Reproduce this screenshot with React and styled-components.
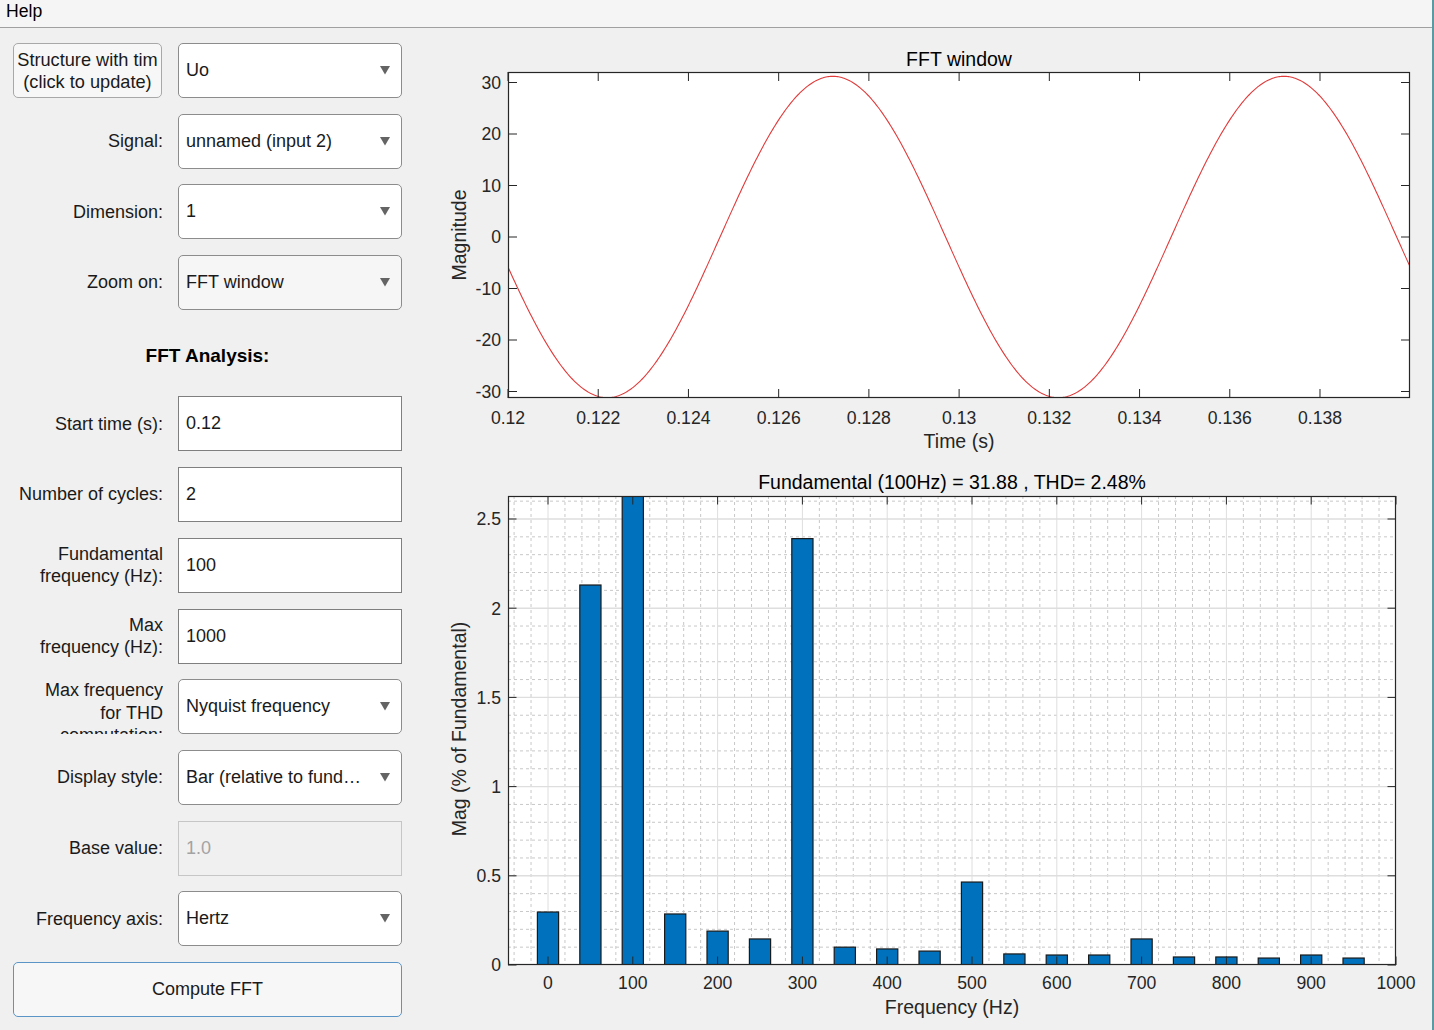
import React from 'react'
import styled, { createGlobalStyle } from 'styled-components'

const GlobalStyle = createGlobalStyle`
  html, body {
    margin: 0;
    padding: 0;
    background: #f0f0f0;
  }
  body {
    font-family: "Liberation Sans", Arial, sans-serif;
  }
`

const Window = styled.div`
  width: 1434px;
  height: 1030px;
  box-sizing: border-box;
  border-right: 2px solid #5b9aa2;
  background: #f0f0f0;
  display: flex;
  flex-direction: column;
  overflow: hidden;
`

const MenuBar = styled.div`
  box-sizing: border-box;
  height: 28px;
  padding: 0 0 4px 6px;
  border-bottom: 1px solid #a0a0a0;
  background: #f5f5f5;
  display: flex;
  align-items: center;
  font-size: 17.6px;
  color: #000;
`

const Content = styled.div`
  display: flex;
  gap: 28px;
  padding: 15px 0 0 13px;
`

const Panel = styled.div`
  width: 389px;
  display: flex;
  flex-direction: column;
  gap: 15.7px;
`

const Row = styled.div`
  display: grid;
  grid-template-columns: 150px 224px;
  column-gap: 15px;
  height: 55px;
`

const Label = styled.div`
  display: flex;
  flex-direction: column;
  justify-content: ${p => (p.$clip ? 'flex-start' : 'center')};
  align-items: flex-end;
  text-align: right;
  font-size: 18px;
  line-height: 22.5px;
  color: #1a1a1a;
  overflow: hidden;
  white-space: nowrap;
`

const PushButton = styled.div`
  box-sizing: border-box;
  width: 149px;
  border: 1px solid #a8a8a8;
  border-radius: 5px;
  background: #f7f7f7;
  display: flex;
  flex-direction: column;
  justify-content: center;
  align-items: center;
  font-size: 18.2px;
  line-height: 22px;
  color: #1a1a1a;
  overflow: hidden;
  white-space: nowrap;
`

const WideButton = styled(PushButton)`
  width: auto;
  height: 55px;
  border-color: #5b95c8;
  font-size: 18px;
`

const Select = styled.div`
  box-sizing: border-box;
  border: 1px solid #8c8c8c;
  border-radius: 5px;
  background: ${p => (p.$tint ? '#f6f6f6' : '#fff')};
  display: flex;
  align-items: center;
  padding: 0 11px 0 7px;
  font-size: 18px;
  color: #1a1a1a;
`

const SelectValue = styled.span`
  flex: 1;
  min-width: 0;
  overflow: hidden;
  white-space: nowrap;
  text-overflow: ellipsis;
`

const Arrow = styled.svg`
  flex: none;
  margin-left: 15px;
`

const Field = styled.div`
  box-sizing: border-box;
  border: 1px solid ${p => (p.$disabled ? '#c6c6c6' : '#7f7f7f')};
  background: ${p => (p.$disabled ? '#f0f0f0' : '#fff')};
  color: ${p => (p.$disabled ? '#a3a3a3' : '#1a1a1a')};
  display: flex;
  align-items: center;
  padding-left: 7px;
  font-size: 18px;
`

const Heading = styled.div`
  box-sizing: border-box;
  height: 55px;
  padding-top: 5px;
  display: flex;
  align-items: center;
  justify-content: center;
  font-size: 19px;
  font-weight: bold;
  color: #000;
`

const Plots = styled.div`
  display: flex;
  flex-direction: column;
`

const PlotSvg = styled.svg`
  display: block;
  font-family: "Liberation Sans", Arial, sans-serif;
`

const INK = '#262626'

function DropArrow() {
  return (
    <Arrow width="10" height="9" viewBox="0 0 10 9">
      <path d="M0 0 L10 0 L5 8.5 Z" fill="#646464" />
    </Arrow>
  )
}

function Dropdown({ value, tint }) {
  return (
    <Select $tint={tint}>
      <SelectValue>{value}</SelectValue>
      <DropArrow />
    </Select>
  )
}

/* ---------- time plot ---------- */
const tx = t => 508 + (t - 0.12) * 45111
const ty = v => 237 - v * 5.15

const sinePath = (() => {
  let d = ''
  for (let i = 0; i <= 800; i++) {
    const t = 0.12 + i * 0.000025
    const v = 31.2 * Math.sin(2 * Math.PI * 100 * (t - 0.1247))
    d += (i === 0 ? 'M' : 'L') + tx(t).toFixed(2) + ' ' + ty(v).toFixed(2)
  }
  return d
})()

const timeTicks = ['0.12', '0.122', '0.124', '0.126', '0.128', '0.13', '0.132', '0.134', '0.136', '0.138']
const magTicks = [30, 20, 10, 0, -10, -20, -30]

function TimePlot() {
  const TL = 9
  return (
    <PlotSvg width="1000" height="417" viewBox="430 43 1000 417">
      <defs>
        <clipPath id="clipTime">
          <rect x="508" y="72" width="902" height="326" />
        </clipPath>
      </defs>
      <text x="959" y="66" fontSize="19.5" fill="#000" textAnchor="middle">FFT window</text>
      <rect x="508" y="72" width="902" height="326" fill="#fff" />
      <path d={sinePath} fill="none" stroke="#e03a3a" strokeWidth="1.1" clipPath="url(#clipTime)" />
      {timeTicks.map(s => {
        const x = tx(parseFloat(s))
        return (
          <g key={s}>
            <line x1={x} y1="398" x2={x} y2={398 - TL} stroke={INK} />
            <line x1={x} y1="72" x2={x} y2={72 + TL} stroke={INK} />
            <text x={x} y="423.5" fontSize="17.6" fill={INK} textAnchor="middle">{s}</text>
          </g>
        )
      })}
      {magTicks.map(v => {
        const y = ty(v)
        return (
          <g key={v}>
            <line x1="508" y1={y} x2={508 + TL} y2={y} stroke={INK} />
            <line x1="1410" y1={y} x2={1410 - TL} y2={y} stroke={INK} />
            <text x="501" y={y + 6.3} fontSize="17.6" fill={INK} textAnchor="end">{v}</text>
          </g>
        )
      })}
      <rect x="508.5" y="72.5" width="901" height="325" fill="none" stroke={INK} strokeWidth="1.2" />
      <text x="959" y="448" fontSize="19.5" fill={INK} textAnchor="middle">Time (s)</text>
      <text transform="translate(466 235) rotate(-90)" fontSize="19.5" fill={INK} textAnchor="middle">Magnitude</text>
    </PlotSvg>
  )
}

/* ---------- spectrum plot ---------- */
const fx = f => 548 + f * 0.848
const fy = v => 965 - v * 178.4

const bars = [
  [0, 0.297], [50, 2.13], [100, 100], [150, 0.286], [200, 0.19],
  [250, 0.146], [300, 2.39], [350, 0.1], [400, 0.09], [450, 0.078],
  [500, 0.465], [550, 0.062], [600, 0.056], [650, 0.056], [700, 0.146],
  [750, 0.045], [800, 0.045], [850, 0.039], [900, 0.056], [950, 0.039],
]

const freqTicks = [0, 100, 200, 300, 400, 500, 600, 700, 800, 900, 1000]
const pctTicks = [0, 0.5, 1, 1.5, 2, 2.5]

const minorX = []
for (let f = -40; f < 1000; f += 20) if (f % 100 !== 0) minorX.push(f)
const minorY = []
for (let i = 1; i <= 26; i++) if (i % 5 !== 0) minorY.push(i / 10)

function SpectrumPlot() {
  const TL = 8.5
  return (
    <PlotSvg width="1000" height="570" viewBox="430 460 1000 570">
      <defs>
        <clipPath id="clipFreq">
          <rect x="508" y="496" width="888" height="469" />
        </clipPath>
      </defs>
      <text x="952" y="489" fontSize="19.5" fill="#000" textAnchor="middle">
        Fundamental (100Hz) = 31.88 , THD= 2.48%
      </text>
      <rect x="508" y="496" width="888" height="469" fill="#fff" />
      <g clipPath="url(#clipFreq)">
        {minorX.map(f => (
          <line key={'mx' + f} x1={fx(f)} y1="496" x2={fx(f)} y2="965" stroke="#c8c8c8" strokeDasharray="3 3" />
        ))}
        {minorY.map(v => (
          <line key={'my' + v} x1="508" y1={fy(v)} x2="1396" y2={fy(v)} stroke="#c8c8c8" strokeDasharray="3 3" />
        ))}
        {freqTicks.map(f => (
          <line key={'gx' + f} x1={fx(f)} y1="496" x2={fx(f)} y2="965" stroke="#dedede" />
        ))}
        {pctTicks.map(v => (
          <line key={'gy' + v} x1="508" y1={fy(v)} x2="1396" y2={fy(v)} stroke="#dedede" strokeWidth="1.4" />
        ))}
        {bars.map(([f, v]) => (
          <rect
            key={'b' + f}
            x={fx(f) - 10.6}
            y={Math.max(fy(v), 480)}
            width="21.2"
            height={965 - Math.max(fy(v), 480)}
            fill="#0072bd"
            stroke="#1a1a1a"
            strokeWidth="1.2"
          />
        ))}
      </g>
      {freqTicks.map(f => {
        const x = fx(f)
        return (
          <g key={'t' + f}>
            <line x1={x} y1="965" x2={x} y2={965 - TL} stroke={INK} />
            <line x1={x} y1="496" x2={x} y2={496 + TL} stroke={INK} />
            <text x={x} y="988.5" fontSize="17.6" fill={INK} textAnchor="middle">{f}</text>
          </g>
        )
      })}
      {pctTicks.map(v => {
        const y = fy(v)
        return (
          <g key={'p' + v}>
            <line x1="508" y1={y} x2={508 + TL} y2={y} stroke={INK} />
            <line x1="1396" y1={y} x2={1396 - TL} y2={y} stroke={INK} />
            <text x="501" y={y + 6.3} fontSize="17.6" fill={INK} textAnchor="end">{v}</text>
          </g>
        )
      })}
      <rect x="508.5" y="496.5" width="887" height="468" fill="none" stroke={INK} strokeWidth="1.2" />
      <text x="952" y="1014" fontSize="19.5" fill={INK} textAnchor="middle">Frequency (Hz)</text>
      <text transform="translate(466 729) rotate(-90)" fontSize="19.5" fill={INK} textAnchor="middle">
        Mag (% of Fundamental)
      </text>
    </PlotSvg>
  )
}

export default function App() {
  return (
    <>
      <GlobalStyle />
      <Window>
        <MenuBar>Help</MenuBar>
        <Content>
          <Panel>
            <Row>
              <PushButton>
                <span>Structure with tim</span>
                <span>(click to update)</span>
              </PushButton>
              <Dropdown value="Uo" />
            </Row>
            <Row>
              <Label>Signal:</Label>
              <Dropdown value="unnamed (input 2)" />
            </Row>
            <Row>
              <Label>Dimension:</Label>
              <Dropdown value="1" />
            </Row>
            <Row>
              <Label>Zoom on:</Label>
              <Dropdown value="FFT window" tint />
            </Row>
            <Heading>FFT Analysis:</Heading>
            <Row>
              <Label>Start time (s):</Label>
              <Field>0.12</Field>
            </Row>
            <Row>
              <Label>Number of cycles:</Label>
              <Field>2</Field>
            </Row>
            <Row>
              <Label>
                <span>Fundamental</span>
                <span>frequency (Hz):</span>
              </Label>
              <Field>100</Field>
            </Row>
            <Row>
              <Label>
                <span>Max</span>
                <span>frequency (Hz):</span>
              </Label>
              <Field>1000</Field>
            </Row>
            <Row>
              <Label $clip>
                <span>Max frequency</span>
                <span>for THD</span>
                <span>computation:</span>
              </Label>
              <Dropdown value="Nyquist frequency" />
            </Row>
            <Row>
              <Label>Display style:</Label>
              <Dropdown value="Bar (relative to fundamental)" />
            </Row>
            <Row>
              <Label>Base value:</Label>
              <Field $disabled>1.0</Field>
            </Row>
            <Row>
              <Label>Frequency axis:</Label>
              <Dropdown value="Hertz" />
            </Row>
            <WideButton>Compute FFT</WideButton>
          </Panel>
          <Plots>
            <TimePlot />
            <SpectrumPlot />
          </Plots>
        </Content>
      </Window>
    </>
  )
}
